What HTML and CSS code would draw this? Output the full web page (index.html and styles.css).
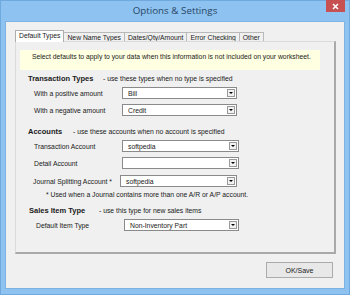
FILE: index.html
```html
<!DOCTYPE html>
<html lang="en">
<head>
  <meta charset="UTF-8" />
  <title>Options &amp; Settings</title>
  <link rel="stylesheet" href="styles.css">
</head>
<body>
  <div class="window">
    <div class="titlebar">
      <span></span>
      <span class="title">Options &amp; Settings</span>
      <span class="close">
        <svg width="7" height="7" viewBox="0 0 7 7"><path d="M1 1 L6 6 M6 1 L1 6" stroke="#fff" stroke-width="1.6"/></svg>
      </span>
    </div>

    <div class="client">
      <div class="tabs">
        <div class="tab active">Default Types</div>
        <div class="tab">New Name Types</div>
        <div class="tab">Dates/Qty/Amount</div>
        <div class="tab">Error Checking</div>
        <div class="tab">Other</div>
      </div>

      <div class="panel">
        <div class="notice">Select defaults to apply to your data when this information is not included on your worksheet.</div>

        <div class="heading"><b>Transaction Types</b><span>- use these types when no type is specified</span></div>
        <div class="row">
          <label>With a positive amount</label>
          <div class="select"><span>Bill</span><i class="arrow"></i></div>
        </div>
        <div class="row">
          <label>With a negative amount</label>
          <div class="select"><span>Credit</span><i class="arrow"></i></div>
        </div>

        <div class="heading gap-top"><b>Accounts</b><span>- use these accounts when no account is specified</span></div>
        <div class="row">
          <label>Transaction Account</label>
          <div class="select wide"><span>softpedia</span><i class="arrow"></i></div>
        </div>
        <div class="row">
          <label>Detail Account</label>
          <div class="select wide"><span></span><i class="arrow"></i></div>
        </div>
        <div class="row journal">
          <label>Journal Splitting Account *</label>
          <div class="select wide"><span>softpedia</span><i class="arrow"></i></div>
        </div>
        <div class="note">* Used when a Journal contains more than one A/R or A/P account.</div>

        <div class="heading sales"><b>Sales Item Type</b><span>- use this type for new sales items</span></div>
        <div class="row item">
          <label>Default Item Type</label>
          <div class="select"><span>Non-Inventory Part</span><i class="arrow"></i></div>
        </div>
      </div>

      <div class="footer">
        <button>OK/Save</button>
      </div>
    </div>
  </div>
</body>
</html>
```

FILE: styles.css
```css
* {
  margin: 0;
  padding: 0;
  box-sizing: border-box;
}
body {
  background: #8dc2f1;
  font-family: 'Liberation Sans', Arial, sans-serif;
  font-size: 6.8px;
  color: #1a1a1a;
}
.window {
  width: 350px;
  height: 295px;
  background: #8dc2f1;
  border: 1px solid #6fa9dd;
  padding: 0 4px 5px 4px;
  display: flex;
  flex-direction: column;
}
.titlebar {
  height: 20px;
  display: grid;
  grid-template-columns: 1fr auto 1fr;
  align-items: start;
}
.title {
  font-family: 'Open Sans', sans-serif;
  font-size: 9.8px;
  color: #2a4563;
  line-height: 19px;
}
.close {
  justify-self: end;
  width: 19px;
  height: 12px;
  margin-top: -1px;
  background: #c75050;
  display: flex;
  align-items: center;
  justify-content: center;
}
.client {
  flex: 1;
  background: #f0f0f0;
  border: 1px solid #7eb2e2;
  padding: 8px 8px 0 9px;
  display: flex;
  flex-direction: column;
}
.tabs {
  display: flex;
  height: 11px;
  align-items: flex-end;
  padding-left: 1px;
}
.tab {
  height: 9px;
  line-height: 9px;
  padding: 0 3px;
  border: 1px solid #b9b9b9;
  border-bottom: none;
  margin-left: -1px;
  background: #f0f0f0;
}
.tab.active {
  line-height: 10px;
  background: #ffffff;
  border-color: #adadad;
  position: relative;
  z-index: 1;
  margin-bottom: -1px;
  height: 12px;
}
.panel {
  width: 321px;
  height: 213px;
  border: 1px solid #dadada;
  border-right: 2px solid #a9a9a9;
  border-bottom: 2px solid #a9a9a9;
  padding: 8px 0 0 4px;
  display: flex;
  flex-direction: column;
}
.notice {
  width: 300px;
  height: 20px;
  background: #ffffe1;
  padding: 3px 0 0 12px;
  line-height: 8px;
  margin-bottom: 4px;
}
.heading {
  height: 10px;
  line-height: 10px;
  padding-left: 8px;
  display: flex;
  margin-bottom: 3px;
}
.heading b {
  font-size: 7.5px;
  width: 75px;
}
.heading.gap-top {
  margin-top: 6px;
}
.heading.gap-top b {
  width: 45px;
}
.heading.sales b {
  width: 70px;
}
.heading.sales {
  margin-top: 6px;
  padding-left: 9px;
}
.row {
  display: flex;
  align-items: center;
  height: 12px;
  margin-bottom: 5px;
  padding-left: 14px;
}
.row label {
  width: 88px;
}
.row.journal {
  margin-top: 1px;
  margin-bottom: 3px;
  padding-left: 13px;
}
.row.journal label {
  width: 87px;
}
.row.item {
  padding-left: 16px;
}
.select {
  width: 115px;
  height: 12px;
  background: #fff;
  border: 1px solid #8a8a8a;
  display: flex;
  align-items: center;
  justify-content: space-between;
  padding: 0 1px 0 5px;
}
.select.wide {
  width: 117px;
}
.arrow {
  width: 8px;
  height: 8px;
  border: 1px solid #9a9a9a;
  background: #f2f2f2;
  position: relative;
}
.arrow::after {
  content: "";
  position: absolute;
  left: 1px;
  top: 2px;
  border-left: 2px solid transparent;
  border-right: 2px solid transparent;
  border-top: 2px solid #000;
}
.note {
  height: 10px;
  line-height: 10px;
  padding-left: 26px;
}
.footer {
  display: flex;
  justify-content: flex-end;
  padding: 8px 3px 0 0;
}
.footer button {
  width: 67px;
  height: 16px;
  font-family: 'Liberation Sans', Arial, sans-serif;
  font-size: 7px;
  background: #e8e8e8;
  border: 1px solid #acacac;
  color: #1a1a1a;
}
```
